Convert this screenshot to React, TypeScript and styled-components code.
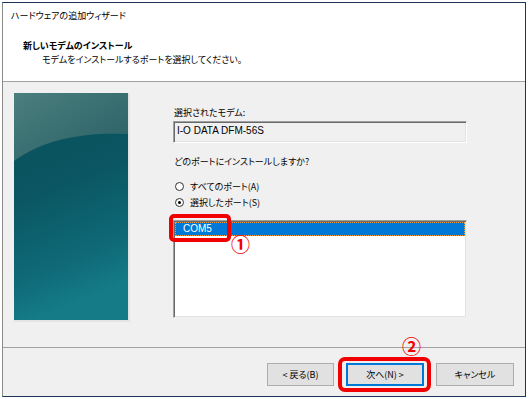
import styled, { createGlobalStyle } from "styled-components";

const GlobalStyle = createGlobalStyle`
    html, body {
        margin: 0;
        padding: 0;
        background: #ffffff;
    }
    body {
        font-family: "Noto Sans CJK JP", "Liberation Sans", sans-serif;
        font-feature-settings: "palt";
        font-size: 9px;
        color: #000;
    }
`;

const Window = styled.div`
    margin: 2px 0 0 2px;
    width: 522px;
    height: 393px;
    border: 1px solid #1d3557;
    border-left-color: #8a8a8a;
    display: flex;
    flex-direction: column;
    background: #f0f0f0;
`;

const Header = styled.div`
    background: #ffffff;
    height: 79px;
    border-bottom: 1px solid #a0a0a0;
    padding: 6px 0 0 8px;
    box-sizing: border-box;
    display: flex;
    flex-direction: column;
`;

const Line = styled.div<{ $indent?: number; $bold?: boolean; $top?: number }>`
    line-height: 14px;
    height: 14px;
    white-space: nowrap;
    padding-left: ${(p) => p.$indent ?? 0}px;
    margin-top: ${(p) => p.$top ?? 0}px;
    font-weight: ${(p) => (p.$bold ? 700 : 400)};
`;

const Latin = styled.span`
    font-family: "Liberation Sans", Arial, sans-serif;
    font-size: 10px;
`;

const Body = styled.div`
    height: 264px;
    padding: 11px 0 0 11px;
    box-sizing: border-box;
    display: flex;
    gap: 43px;
`;

const Banner = styled.div`
    width: 116px;
    height: 229px;
    flex: none;
`;

const Column = styled.div`
    width: 294px;
    display: flex;
    flex-direction: column;
`;

const ReadOnlyBox = styled.div`
    margin-top: 1px;
    height: 22px;
    box-sizing: border-box;
    background: #f0f0f0;
    border: 1px solid;
    border-color: #a0a0a0 #ffffff #ffffff #a0a0a0;
    box-shadow: inset 1px 1px 0 #696969, inset -1px -1px 0 #e3e3e3;
    padding: 0 3px;
    line-height: 18px;
    white-space: nowrap;
`;

const RadioRow = styled.label<{ $top?: number }>`
    display: flex;
    align-items: center;
    gap: 6px;
    height: 16px;
    margin-top: ${(p) => p.$top ?? 0}px;
    padding-left: 2px;
    white-space: nowrap;
`;

const RadioDot = styled.span<{ $on?: boolean }>`
    width: 9px;
    height: 9px;
    box-sizing: border-box;
    border: 1px solid #333;
    border-radius: 50%;
    background: #fff;
    display: flex;
    align-items: center;
    justify-content: center;
    &::after {
        content: "";
        width: 3px;
        height: 3px;
        border-radius: 50%;
        background: ${(p) => (p.$on ? "#000" : "transparent")};
    }
`;

const ListWrap = styled.div`
    position: relative;
    margin-top: 10px;
`;

const ListBox = styled.div`
    height: 98px;
    box-sizing: border-box;
    background: #ffffff;
    border: 1px solid;
    border-color: #a0a0a0 #f0f0f0 #f0f0f0 #a0a0a0;
    box-shadow: inset 1px 1px 0 #696969, inset -1px -1px 0 #e3e3e3;
    padding: 1px 1px 0 1px;
`;

const ListItem = styled.div`
    height: 14px;
    box-sizing: border-box;
    background: #0078d7;
    color: #ffffff;
    outline: 1px dotted #f0a040;
    outline-offset: -1px;
    padding-left: 8px;
    line-height: 14px;
`;

const Callout = styled.div<{ $l: number; $t: number; $w: number; $h: number; $r: number }>`
    position: absolute;
    left: ${(p) => p.$l}px;
    top: ${(p) => p.$t}px;
    width: ${(p) => p.$w}px;
    height: ${(p) => p.$h}px;
    box-sizing: border-box;
    border: 4px solid #f20000;
    border-radius: ${(p) => p.$r}px;
    pointer-events: none;
`;

const Marker = styled.span<{ $l: number; $t: number }>`
    position: absolute;
    left: ${(p) => p.$l}px;
    top: ${(p) => p.$t}px;
    color: #f20000;
    font-size: 19px;
    font-weight: 700;
    line-height: 19px;
    font-feature-settings: normal;
`;

const Separator = styled.div`
    height: 1px;
    background: #a0a0a0;
    margin-top: 1px;
`;

const Footer = styled.div`
    flex: 1;
    display: flex;
    justify-content: flex-end;
    align-items: flex-start;
    padding: 15px 11px 0 0;
    gap: 12px;
`;

const ButtonSlot = styled.div`
    position: relative;
    display: flex;
`;

const Button = styled.button<{ $w: number; $focus?: boolean }>`
    width: ${(p) => p.$w}px;
    height: 23px;
    margin: 0;
    padding: 0;
    font: inherit;
    font-feature-settings: "palt";
    color: #000;
    background: #e1e1e1;
    border: 1px solid ${(p) => (p.$focus ? "#0078d7" : "#adadad")};
    box-shadow: ${(p) => (p.$focus ? "inset 0 0 0 1px #0078d7" : "none")};
    white-space: nowrap;
`;

const BannerArt = () => (
    <svg width="116" height="229" viewBox="0 0 116 229">
        <defs>
            <linearGradient id="base" x1="0" y1="0" x2="0.2" y2="1">
                <stop offset="0" stopColor="#0a4f5c" />
                <stop offset="0.45" stopColor="#0a5662" />
                <stop offset="0.8" stopColor="#0f6977" />
                <stop offset="1" stopColor="#157c87" />
            </linearGradient>
            <linearGradient id="gloss" x1="0" y1="0" x2="1" y2="1">
                <stop offset="0" stopColor="#4b7f7e" />
                <stop offset="1" stopColor="#285f64" />
            </linearGradient>
        </defs>
        <rect x="0" y="0" width="116" height="229" fill="#e4e4e4" />
        <rect x="0" y="0" width="114" height="227" fill="url(#base)" />
        <path d="M0 0 H114 V41 C70 39 30 46 0 68 Z" fill="url(#gloss)" />
    </svg>
);

const App = () => {
    return (
        <>
            <GlobalStyle />
            <Window>
                <Header>
                    <Line>ハードウェアの追加ウィザード</Line>
                    <Line $bold $indent={12} $top={16}>
                        新しいモデムのインストール
                    </Line>
                    <Line $indent={31}>モデムをインストールするポートを選択してください。</Line>
                </Header>
                <Body>
                    <Banner>
                        <BannerArt />
                    </Banner>
                    <Column>
                        <Line $indent={1} $top={13}>
                            選択されたモデム:
                        </Line>
                        <ReadOnlyBox>
                            <Latin>I-O DATA DFM-56S</Latin>
                        </ReadOnlyBox>
                        <Line $indent={1} $top={12}>
                            どのポートにインストールしますか?
                        </Line>
                        <RadioRow $top={9}>
                            <RadioDot />
                            すべてのポート(A)
                        </RadioRow>
                        <RadioRow>
                            <RadioDot $on />
                            選択したポート(S)
                        </RadioRow>
                        <ListWrap>
                            <ListBox>
                                <ListItem>
                                    <Latin>COM5</Latin>
                                </ListItem>
                            </ListBox>
                            <Callout $l={-4} $t={-6} $w={62} $h={28} $r={5} />
                            <Marker $l={58} $t={14}>①</Marker>
                        </ListWrap>
                    </Column>
                </Body>
                <Separator />
                <Footer>
                    <Button $w={67}>&lt; 戻る(B)</Button>
                    <ButtonSlot>
                        <Button $w={78} $focus>
                            次へ(N) &gt;
                        </Button>
                        <Callout $l={-8} $t={-6} $w={93} $h={35} $r={7} />
                        <Marker $l={56} $t={-27}>②</Marker>
                    </ButtonSlot>
                    <Button $w={78}>キャンセル</Button>
                </Footer>
            </Window>
        </>
    );
};

export default App;
